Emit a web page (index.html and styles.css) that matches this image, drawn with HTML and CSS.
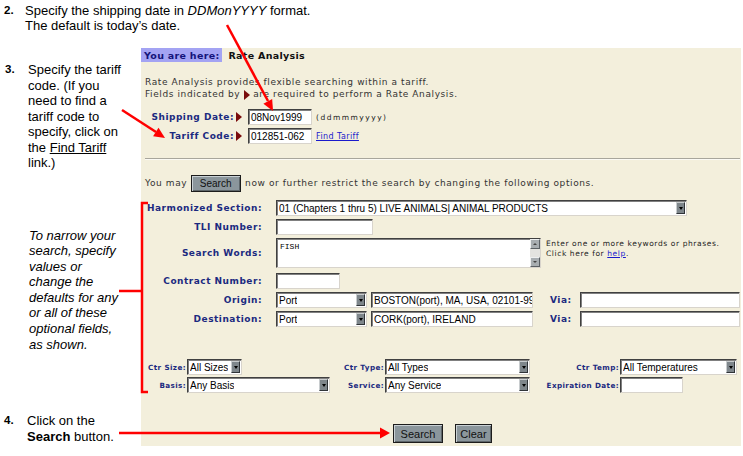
FILE: index.html
```html
<!DOCTYPE html>
<html>
<head>
<meta charset="utf-8">
<title>Rate Analysis</title>
<link rel="stylesheet" href="styles.css">
</head>
<body>
<div class="page">
  <div class="step step2">
    <span class="num">2.</span>
    <div class="stxt">Specify the shipping date in <i>DDMonYYYY</i> format.<br>The default is today’s date.</div>
  </div>
  <div class="main">
    <div class="left">
      <div class="step step3">
        <span class="num">3.</span>
        <div class="stxt">Specify the tariff<br>code. (If you<br>need to find a<br>tariff code to<br>specify, click on<br>the <u>Find Tariff</u><br>link.)</div>
      </div>
      <div class="narrow">To narrow your<br>search, specify<br>values or<br>change the<br>defaults for any<br>or all of these<br>optional fields,<br>as shown.</div>
      <div class="step step4">
        <span class="num">4.</span>
        <div class="stxt">Click on the<br><b>Search</b> button.</div>
      </div>
    </div>
    <div class="panel">
      <div class="crumb"><span class="here">You are here:</span><span class="where">Rate Analysis</span></div>
      <p class="intro">Rate Analysis provides flexible searching within a tariff.<br>Fields indicated by <span class="req"></span> are required to perform a Rate Analysis.</p>
      <div class="reqrows">
        <div class="rrow"><span class="rlabel">Shipping Date:</span><span class="req"></span><span class="inp w64">08Nov1999</span><span class="hint">(ddmmmyyyy)</span></div>
        <div class="rrow"><span class="rlabel">Tariff Code:</span><span class="req"></span><span class="inp w64">012851-062</span><a class="link">Find Tariff</a></div>
      </div>
      <div class="rule"></div>
      <div class="maysearch">You may <span class="btn small">Search</span> now or further restrict the search by changing the following options.</div>
      <div class="opts">
        <div class="orow"><span class="olabel">Harmonized Section:</span><span class="sel w411"><span class="stx">01 (Chapters 1 thru 5) LIVE ANIMALS| ANIMAL PRODUCTS</span><span class="dd"></span></span></div>
        <div class="orow"><span class="olabel">TLI Number:</span><span class="inp w97"></span></div>
        <div class="orow"><span class="olabel">Search Words:</span><span class="ta"><span class="tatext">FISH</span><span class="sb"><span class="sbu"></span><span class="sbd"></span></span></span><span class="help">Enter one or more keywords or phrases.<br>Click here for <a class="hlink">help</a>.</span></div>
        <div class="orow gap5"><span class="olabel">Contract Number:</span><span class="inp w64"></span></div>
        <div class="orow"><span class="olabel">Origin:</span><span class="sel w91"><span class="stx">Port</span><span class="dd"></span></span><span class="inp w162 ml4">BOSTON(port), MA, USA, 02101-99</span><span class="via">Via:</span><span class="inp w160"></span></div>
        <div class="orow"><span class="olabel">Destination:</span><span class="sel w91"><span class="stx">Port</span><span class="dd"></span></span><span class="inp w162 ml4">CORK(port), IRELAND</span><span class="via">Via:</span><span class="inp w160"></span></div>
      </div>
      <div class="ctr">
        <span class="clabel">Ctr Size:</span><span class="cell"><span class="sel w55"><span class="stx">All Sizes</span><span class="dd"></span></span></span>
        <span class="clabel">Ctr Type:</span><span class="cell"><span class="sel w145"><span class="stx">All Types</span><span class="dd"></span></span></span>
        <span class="clabel">Ctr Temp:</span><span class="cell"><span class="sel w117"><span class="stx">All Temperatures</span><span class="dd"></span></span></span>
        <span class="clabel">Basis:</span><span class="cell"><span class="sel w143"><span class="stx">Any Basis</span><span class="dd"></span></span></span>
        <span class="clabel">Service:</span><span class="cell"><span class="sel w145"><span class="stx">Any Service</span><span class="dd"></span></span></span>
        <span class="clabel">Expiration Date:</span><span class="cell"><span class="inp w63"></span></span>
      </div>
      <div class="actions"><span class="btn big bs">Search</span><span class="btn big bc">Clear</span></div>
    </div>
  </div>
  <svg class="marks" width="743" height="456" viewBox="0 0 743 456">
    <g stroke="#ff0000" stroke-width="2.5" fill="none">
      <line x1="227" y1="25" x2="268" y2="101"/>
      <line x1="122" y1="110" x2="156" y2="132"/>
      <line x1="119" y1="433" x2="381" y2="433"/>
      <path d="M148 203 H142 V392 H148"/>
      <line x1="119" y1="291" x2="142" y2="291"/>
    </g>
    <g fill="#ff0000">
      <polygon points="273,111 263.4,103.7 272.2,98.9"/>
      <polygon points="165,138 153.1,136.2 158.5,127.8"/>
      <polygon points="390,433 380,427.5 380,438.5"/>
    </g>
  </svg>
</div>
</body>
</html>
```

FILE: styles.css
```css
* { box-sizing: border-box; }
html, body { margin: 0; padding: 0; background: #fff; }
body {
  width: 743px;
  height: 456px;
  overflow: hidden;
  font-family: "Liberation Sans", Arial, sans-serif;
  font-size: 13px;
  color: #000;
}
.page { position: relative; width: 743px; height: 456px; }

/* annotations */
.step { display: flex; line-height: 15.5px; }
.num { font-weight: bold; font-size: 11.5px; flex: none; }
.step2 { height: 48px; padding: 3px 0 0 4px; line-height: 15px; }
.step2 .num { width: 21px; }
.step3 { margin-top: 14px; padding-left: 5px; }
.step3 .num { width: 23px; }
.narrow { margin-top: 57px; padding-left: 29px; font-style: italic; line-height: 15.6px; }
.step4 { margin-top: 61px; padding-left: 4px; }
.step4 .num { width: 23px; }

.main { display: flex; }
.left { width: 141px; flex: none; }

/* panel */
.panel {
  width: 600px;
  height: 398px;
  flex: none;
  background: #f3efdc;
  font-family: "DejaVu Sans", Verdana, sans-serif;
  font-size: 9px;
  letter-spacing: 0.6px;
  color: #333;
}
.crumb { display: flex; align-items: center; height: 14px; font-weight: bold; font-size: 9.5px; letter-spacing: 0.3px; }
.here { background: #a3a3f3; color: #14147a; height: 14px; padding: 0 3px; display: flex; align-items: center; }
.where { color: #111; margin-left: 6px; }
.intro { margin: 14px 0 0 4px; line-height: 12px; }
.req {
  display: inline-block;
  width: 0; height: 0;
  border-top: 5px solid transparent;
  border-bottom: 5px solid transparent;
  border-left: 6px solid #7a0c0c;
  vertical-align: middle;
}
.reqrows { margin-top: 9px; display: flex; flex-direction: column; gap: 3px; }
.rrow { display: flex; align-items: center; height: 16px; }
.rlabel { width: 93px; text-align: right; font-weight: bold; font-size: 9px; letter-spacing: 0.5px; color: #1b2a80; }
.rrow .req { margin-left: 2px; margin-right: 6px; }
.hint { margin-left: 4px; font-size: 7.5px; letter-spacing: 1.5px; color: #222; }
.link { margin-left: 4px; font-size: 8px; letter-spacing: 0.4px; color: #1a1acc; text-decoration: underline; }

.inp, .sel {
  display: inline-flex;
  align-items: center;
  height: 16px;
  background: #fff;
  border: 1px solid;
  border-color: #404040 #d8d4cc #d8d4cc #404040;
  box-shadow: inset 1px 1px 0 #808080;
  font-family: "Liberation Sans", Arial, sans-serif;
  font-size: 10px;
  letter-spacing: 0;
  color: #000;
  padding-left: 2px;
  white-space: nowrap;
  overflow: hidden;
  flex: none;
}
.sel { justify-content: space-between; padding-right: 1px; }
.stx { overflow: hidden; }
.dd {
  flex: none;
  width: 9px;
  height: 12px;
  background: #7e868b;
  border: 1px solid;
  border-color: #c8ccce #303438 #303438 #c8ccce;
  display: flex;
  align-items: center;
  justify-content: center;
}
.dd::after {
  content: "";
  width: 0; height: 0;
  border-left: 2.5px solid transparent;
  border-right: 2.5px solid transparent;
  border-top: 3px solid #000;
}
.w55 { width: 55px; }
.w63 { width: 63px; }
.w64 { width: 64px; }
.w91 { width: 91px; }
.w97 { width: 97px; }
.w117 { width: 117px; }
.w143 { width: 143px; }
.w145 { width: 145px; }
.w160 { width: 160px; }
.w162 { width: 162px; }
.w411 { width: 411px; }
.ml4 { margin-left: 4px; }

.rule { margin: 14px 0 0 4px; width: 595px; height: 2px; border-top: 1px solid #a8a69c; border-bottom: 1px solid #fbfaf4; }

.maysearch { margin: 15px 0 0 4px; height: 16px; display: flex; align-items: center; white-space: pre; }
.btn {
  display: inline-flex;
  align-items: center;
  justify-content: center;
  background: #8b969c;
  border: 1px solid #1c1c1c;
  box-shadow: inset 1px 1px 0 #c9d1d5, inset -1px -1px 0 #5e666a;
  font-family: "Liberation Sans", Arial, sans-serif;
  letter-spacing: 0;
  color: #111;
}
.btn.small { width: 50px; height: 17px; font-size: 10px; margin: 0 1px 0 0; }

.opts { margin-top: 9px; display: flex; flex-direction: column; gap: 3px; }
.orow { display: flex; align-items: center; }
.orow.gap5 { margin-top: 2px; }
.olabel { width: 121px; margin-right: 14px; text-align: right; font-weight: bold; font-size: 9px; letter-spacing: 0.5px; color: #1b2a80; flex: none; }
.ta {
  display: flex;
  width: 265px;
  height: 30px;
  background: #fff;
  border: 1px solid;
  border-color: #404040 #d8d4cc #d8d4cc #404040;
  box-shadow: inset 1px 1px 0 #808080;
  flex: none;
}
.tatext { flex: 1; font-family: "Liberation Mono", "Courier New", monospace; font-size: 8px; letter-spacing: 0; color: #000; padding: 3px 0 0 3px; }
.sb { width: 10px; background: #e4e4e0; display: flex; flex-direction: column; justify-content: space-between; }
.sbu, .sbd {
  height: 10px;
  background: #a8aeb1;
  border: 1px solid;
  border-color: #eef0f0 #5a6064 #5a6064 #eef0f0;
  display: flex;
  align-items: center;
  justify-content: center;
}
.sbu::after { content: ""; border-left: 2px solid transparent; border-right: 2px solid transparent; border-bottom: 2px solid #444; }
.sbd::after { content: ""; border-left: 2px solid transparent; border-right: 2px solid transparent; border-top: 2px solid #444; }
.help { align-self: flex-start; margin: 1px 0 0 5px; font-size: 7.5px; letter-spacing: 0.6px; line-height: 10px; color: #222; }
.hlink { color: #1a1acc; text-decoration: underline; }
.via { margin: 0 8px 0 17px; font-weight: bold; font-size: 9px; letter-spacing: 0.5px; color: #1b2a80; }

.ctr {
  margin-top: 32px;
  display: grid;
  grid-template-columns: 46px 143px 55px 145px 90px 121px;
  row-gap: 2px;
  align-items: center;
}
.clabel { text-align: right; padding-right: 1px; font-weight: bold; font-size: 7.2px; letter-spacing: 0.4px; color: #1b2a80; }
.cell { display: flex; }

.actions { margin-top: 31px; padding-left: 252px; display: flex; gap: 12px; }
.btn.big { height: 19px; font-size: 11px; }
.bs { width: 50px; }
.bc { width: 37px; }

.marks { position: absolute; left: 0; top: 0; pointer-events: none; }
```
